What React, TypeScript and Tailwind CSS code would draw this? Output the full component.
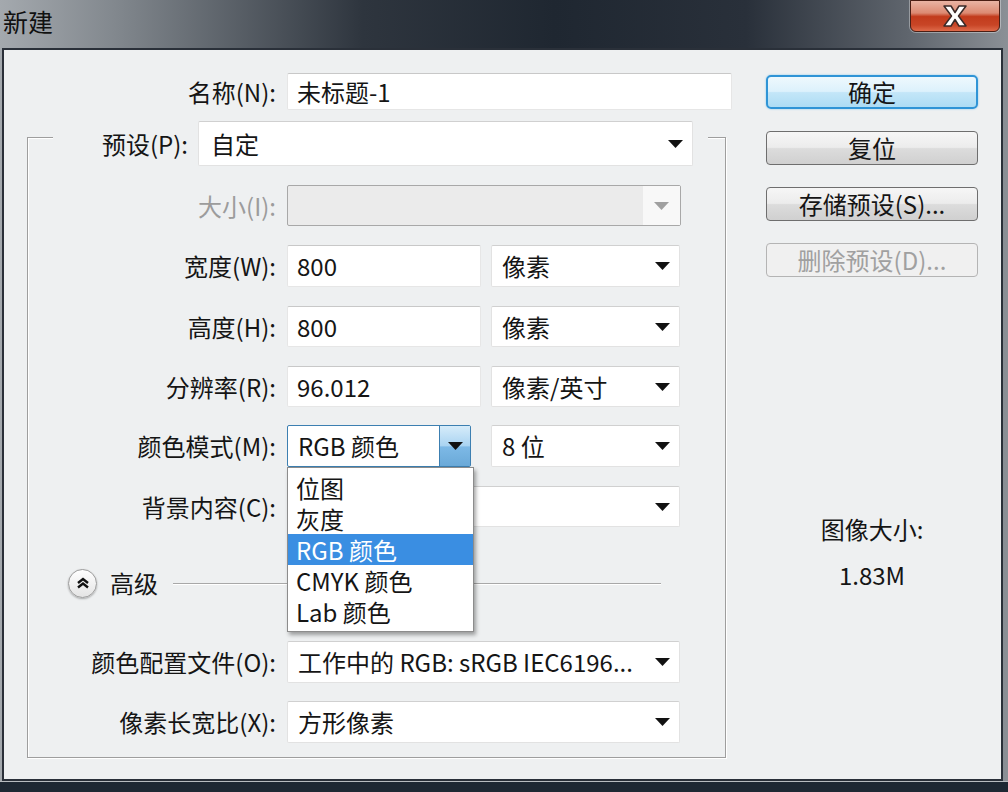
import React from 'react';

const Arrow = ({ c = '#111' }: { c?: string }) => (
  <svg width="15" height="8" viewBox="0 0 15 8" className="shrink-0">
    <path d="M0 0H15L7.5 8Z" fill={c} />
  </svg>
);

function Sel({ w, text, pl = 'pl-[10px]' }: { w: string; text: string; pl?: string }) {
  return (
    <div className={`${w} h-full bg-white border border-[#e2e2e2] border-t-[#d0d0d0] rounded-[2px] flex items-center justify-between ${pl} pr-[9px]`}>
      <span className="whitespace-nowrap">{text}</span>
      <Arrow />
    </div>
  );
}

function Inp({ w, text }: { w: string; text: string }) {
  return (
    <div className={`${w} h-full bg-white border border-[#e6e6e6] border-t-[#c8c8c8] rounded-[2px] flex items-center pl-[9px]`}>
      <span className="whitespace-nowrap">{text}</span>
    </div>
  );
}

function Label({ text, gray }: { text: string; gray?: boolean }) {
  return (
    <div className={`w-[283px] pr-[11px] text-right whitespace-nowrap ${gray ? 'text-[#9c9c9c]' : ''}`}>{text}</div>
  );
}

function Btn({ text, primary, disabled }: { text: string; primary?: boolean; disabled?: boolean }) {
  if (primary) {
    return (
      <div className="h-[34px] rounded-[5px] border-2 border-[#2f94d6] shadow-[0_0_2px_#7cc4ee] bg-[linear-gradient(#eef8fd,#dcf1fc_48%,#c3e6f8_52%,#addcf4)] flex items-center justify-center">
        {text}
      </div>
    );
  }
  if (disabled) {
    return (
      <div className="h-[34px] rounded-[4px] border border-[#b4b4b4] bg-[#f0f0f0] text-[#a0a0a0] flex items-center justify-center">
        {text}
      </div>
    );
  }
  return (
    <div className="h-[34px] rounded-[4px] border border-[#6e6e6e] bg-[linear-gradient(#f6f6f6,#ececec_48%,#dcdcdc_52%,#d0d0d0)] flex items-center justify-center">
      {text}
    </div>
  );
}

export default function App() {
  return (
    <div className="w-[1008px] h-[792px] overflow-hidden flex flex-col bg-[linear-gradient(90deg,#a4a9ae_0%,#80868c_12%,#2e353e_36%,#1f2731_55%,#29303a_74%,#5f656d_90%,#8b9096_100%)] [font-family:'Noto_Sans_CJK_SC','Noto_Sans',sans-serif] text-[24px] leading-[30px] text-[#151515]">
      {/* Title bar */}
      <div className="h-[48px] shrink-0 flex items-start justify-between">
        <div className="pl-[3px] pt-[5px] text-[25px] text-[#111] leading-[32px]">新建</div>
        <div className="mr-[8px] w-[90px] h-[32px] rounded-b-[6px] border border-[#4a1e14] shadow-[0_0_0_1px_rgba(255,255,255,0.35)] bg-[linear-gradient(#e9b4a4,#dc8a72_40%,#c23b1c_52%,#c84526_80%,#de6a4a)] flex items-center justify-center">
          <svg width="28" height="24" viewBox="0 0 28 24">
            <path d="M3 2H10L14 8.5L18 2H25L17.5 12L25 22H18L14 15.5L10 22H3L10.5 12Z" fill="#fff" stroke="#3a2a28" strokeWidth="1.5" strokeLinejoin="round" />
          </svg>
        </div>
      </div>

      {/* Client area */}
      <div className="ml-[2px] w-[1001px] h-[733px] shrink-0 border-2 border-[#2a3039] bg-[#eef0f1] flex">
        {/* Left form */}
        <div className="relative w-[740px] flex flex-col">
          {/* group box */}
          <div className="absolute left-[23px] top-[87px] w-[699px] h-[621px] border border-[#9e9e9e] shadow-[inset_1px_1px_0_#ffffff,1px_1px_0_#ffffff]" />

          {/* 名称 */}
          <div className="mt-[23px] h-[37px] flex items-center">
            <Label text="名称(N):" />
            <Inp w="w-[445px]" text="未标题-1" />
          </div>

          {/* 预设 */}
          <div className="relative z-10 mt-[11px] h-[45px] ml-[49px] w-[655px] bg-[#eef0f1] flex items-center">
            <div className="w-[145px] pr-[10px] text-right whitespace-nowrap">预设(P):</div>
            <Sel w="w-[495px]" text="自定" pl="pl-[12px]" />
          </div>

          {/* 大小 */}
          <div className="mt-[19px] h-[41px] flex items-center">
            <Label text="大小(I):" gray />
            <div className="w-[394px] h-full border border-[#a8a8a8] rounded-[2px] bg-[#ebebeb] flex">
              <div className="flex-1" />
              <div className="w-[37px] h-full bg-[#f8f8f8] flex items-center justify-center">
                <Arrow c="#a0a0a0" />
              </div>
            </div>
          </div>

          {/* 宽度 */}
          <div className="mt-[19px] h-[42px] flex items-center">
            <Label text="宽度(W):" />
            <Inp w="w-[194px]" text="800" />
            <div className="ml-[10px] h-full flex">
              <Sel w="w-[189px]" text="像素" />
            </div>
          </div>

          {/* 高度 */}
          <div className="mt-[19px] h-[41px] flex items-center">
            <Label text="高度(H):" />
            <Inp w="w-[194px]" text="800" />
            <div className="ml-[10px] h-full flex">
              <Sel w="w-[189px]" text="像素" />
            </div>
          </div>

          {/* 分辨率 */}
          <div className="mt-[19px] h-[41px] flex items-center">
            <Label text="分辨率(R):" />
            <Inp w="w-[194px]" text="96.012" />
            <div className="ml-[10px] h-full flex">
              <Sel w="w-[189px]" text="像素/英寸" />
            </div>
          </div>

          {/* 颜色模式 */}
          <div className="mt-[18px] h-[42px] flex items-center">
            <Label text="颜色模式(M):" />
            <div className="w-[184px] h-full bg-white border border-[#3c7fb1] rounded-[2px] flex">
              <div className="flex-1 flex items-center pl-[10px] whitespace-nowrap">RGB 颜色</div>
              <div className="w-[31px] h-full border-l border-[#3c7fb1] bg-[linear-gradient(#d6ecfa,#a9d3f1_50%,#7db9e6_52%,#6aa9d8)] flex items-center justify-center">
                <Arrow />
              </div>
            </div>
            <div className="ml-[20px] h-full flex">
              <Sel w="w-[189px]" text="8 位" />
            </div>
          </div>

          {/* 背景内容 */}
          <div className="mt-[19px] h-[41px] flex items-center">
            <Label text="背景内容(C):" />
            <Sel w="w-[393px]" text="" />
          </div>

          {/* 高级 */}
          <div className="mt-[41px] h-[30px] flex items-center pl-[64px]">
            <div className="w-[29px] h-[29px] rounded-full border border-[#9a9a9a] bg-[linear-gradient(#ffffff,#e4e4e4)] shadow-[0_1px_2px_rgba(0,0,0,0.3)] flex items-center justify-center">
              <svg width="16" height="16" viewBox="0 0 16 16">
                <path d="M3 8L8 4L13 8M3 12.5L8 8.5L13 12.5" fill="none" stroke="#111" strokeWidth="2.4" />
              </svg>
            </div>
            <div className="ml-[13px] whitespace-nowrap">高级</div>
            <div className="ml-[15px] w-[488px] h-px bg-[#a8a8a8] shadow-[0_1px_0_#ffffff]" />
          </div>

          {/* 颜色配置文件 */}
          <div className="mt-[43px] h-[42px] flex items-center">
            <Label text="颜色配置文件(O):" />
            <Sel w="w-[393px]" text="工作中的 RGB: sRGB IEC6196..." />
          </div>

          {/* 像素长宽比 */}
          <div className="mt-[18px] h-[42px] flex items-center">
            <Label text="像素长宽比(X):" />
            <Sel w="w-[393px]" text="方形像素" />
          </div>

          {/* dropdown list */}
          <div className="absolute z-20 left-[283px] top-[417px] w-[187px] h-[165px] bg-white border border-[#8c8c8c] shadow-[2px_3px_4px_rgba(0,0,0,0.35)] pt-[4px] leading-[28px]">
            <div className="h-[31px] pl-[8px] flex items-center">位图</div>
            <div className="h-[31px] pl-[8px] flex items-center">灰度</div>
            <div className="h-[31px] pl-[8px] flex items-center bg-[#3a8ee2] text-white">RGB 颜色</div>
            <div className="h-[31px] pl-[8px] flex items-center">CMYK 颜色</div>
            <div className="h-[31px] pl-[8px] flex items-center">Lab 颜色</div>
          </div>
        </div>

        {/* Right column */}
        <div className="ml-[22px] w-[212px] flex flex-col">
          <div className="mt-[25px]"><Btn text="确定" primary /></div>
          <div className="mt-[22px]"><Btn text="复位" /></div>
          <div className="mt-[22px]"><Btn text="存储预设(S)..." /></div>
          <div className="mt-[22px]"><Btn text="删除预设(D)..." disabled /></div>
          <div className="mt-[237px] h-[30px] flex items-center justify-center">图像大小:</div>
          <div className="mt-[16px] h-[30px] flex items-center justify-center">1.83M</div>
        </div>
      </div>

      <div className="flex-1 bg-[#1e2833] border-t border-[#b8bcc0]" />
    </div>
  );
}
